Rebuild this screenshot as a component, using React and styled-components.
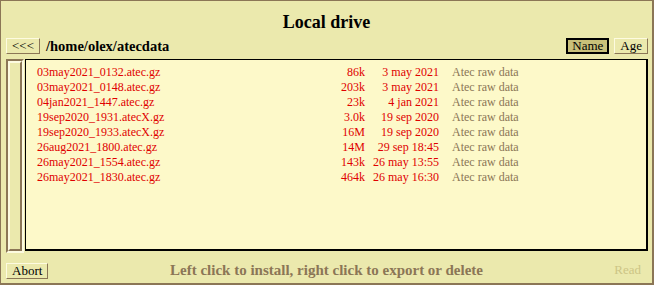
import React from 'react';
import styled, { createGlobalStyle } from 'styled-components';

const GlobalStyle = createGlobalStyle`
  html, body {
    margin: 0;
    padding: 0;
    background: #ebe9ad;
  }
`;

const files = [
  { name: '03may2021_0132.atec.gz', size: '86k', date: '3 may 2021' },
  { name: '03may2021_0148.atec.gz', size: '203k', date: '3 may 2021' },
  { name: '04jan2021_1447.atec.gz', size: '23k', date: '4 jan 2021' },
  { name: '19sep2020_1931.atecX.gz', size: '3.0k', date: '19 sep 2020' },
  { name: '19sep2020_1933.atecX.gz', size: '16M', date: '19 sep 2020' },
  { name: '26aug2021_1800.atec.gz', size: '14M', date: '29 sep 18:45' },
  { name: '26may2021_1554.atec.gz', size: '143k', date: '26 may 13:55' },
  { name: '26may2021_1830.atec.gz', size: '464k', date: '26 may 16:30' },
];

const App = () => {
  return (
    <>
      <GlobalStyle />
      <Window>
        <Title>Local drive</Title>
        <Toolbar>
          <Button>&lt;&lt;&lt;</Button>
          <Path>/home/olex/atecdata</Path>
          <SortGroup>
            <Button pressed>Name</Button>
            <Button>Age</Button>
          </SortGroup>
        </Toolbar>
        <Main>
          <Trough>
            <Slider />
          </Trough>
          <List>
            {files.map((f) => (
              <Row key={f.name}>
                <Cell>{f.name}</Cell>
                <Cell right>{f.size}</Cell>
                <Cell right>{f.date}</Cell>
                <Cell muted>Atec raw data</Cell>
              </Row>
            ))}
          </List>
        </Main>
        <Footer>
          <div>
            <Button>Abort</Button>
          </div>
          <Status>Left click to install, right click to export or delete</Status>
          <Disabled>Read</Disabled>
        </Footer>
      </Window>
    </>
  );
};

const Window = styled.div`
  box-sizing: border-box;
  width: 654px;
  height: 285px;
  background: #ebe9ad;
  border: 1px solid #8b7656;
  border-right-width: 2px;
  border-bottom-width: 2px;
  display: flex;
  flex-direction: column;
  font-family: 'Liberation Serif', serif;
`;

const Title = styled.div`
  padding: 11px 0 6px;
  line-height: 20px;
  font-size: 18px;
  font-weight: bold;
  text-align: center;
  color: #000;
`;

const Toolbar = styled.div`
  display: flex;
  align-items: center;
  height: 16px;
  padding: 0 4px 0 5px;
`;

const Button = styled.button`
  box-sizing: border-box;
  height: 16px;
  padding: 0 5px;
  margin: 0;
  font-family: 'Liberation Serif', serif;
  font-size: 13px;
  line-height: 14px;
  color: #000;
  background: ${(p) => (p.pressed ? '#c9c17a' : '#ebe9ad')};
  border: 1px solid;
  border-color: ${(p) =>
    p.pressed ? '#000' : '#fdfbe0 #8b7656 #8b7656 #fdfbe0'};
  outline: ${(p) => (p.pressed ? '1px solid #000' : 'none')};
  outline-offset: -2px;
  cursor: pointer;
`;

const Path = styled.div`
  margin-left: 6px;
  font-size: 14.5px;
  font-weight: bold;
  line-height: 16px;
  color: #000;
`;

const SortGroup = styled.div`
  margin-left: auto;
  display: flex;
  gap: 5px;
`;

const Main = styled.div`
  display: flex;
  gap: 1px;
  margin: 5px 4px 0 5px;
  height: 194px;
`;

const Trough = styled.div`
  box-sizing: border-box;
  width: 18px;
  height: 194px;
  border: 2px solid;
  border-color: #8b7656 #fdfbe0 #fdfbe0 #8b7656;
`;

const Slider = styled.div`
  box-sizing: border-box;
  height: 100%;
  width: 14px;
  background: #ebe9ad;
  border: 2px solid;
  border-color: #fdfbe0 #8b7656 #8b7656 #fdfbe0;
`;

const List = styled.div`
  box-sizing: border-box;
  flex: 1;
  height: 192px;
  background: #fdf9c9;
  border: 1px solid #000;
  border-right-width: 2px;
  border-bottom-width: 2px;
  padding: 5px 0 0 11px;
`;

const Row = styled.div`
  display: grid;
  grid-template-columns: 280px 48px 74px auto;
  font-size: 12px;
  line-height: 15px;
  color: #e00000;
`;

const Cell = styled.div`
  text-align: ${(p) => (p.right ? 'right' : 'left')};
  white-space: nowrap;
  color: ${(p) => (p.muted ? '#8b7656' : 'inherit')};
  padding-left: ${(p) => (p.muted ? '13px' : '0')};
`;

const Footer = styled.div`
  display: grid;
  grid-template-columns: 1fr auto 1fr;
  align-items: center;
  margin-top: 8px;
  padding: 0 5px;
  height: 16px;
`;

const Status = styled.div`
  font-size: 15px;
  font-weight: bold;
  color: #8b7656;
  white-space: nowrap;
`;

const Disabled = styled.div`
  justify-self: end;
  margin-right: 6px;
  font-size: 13px;
  color: #cdc585;
`;

export default App;
